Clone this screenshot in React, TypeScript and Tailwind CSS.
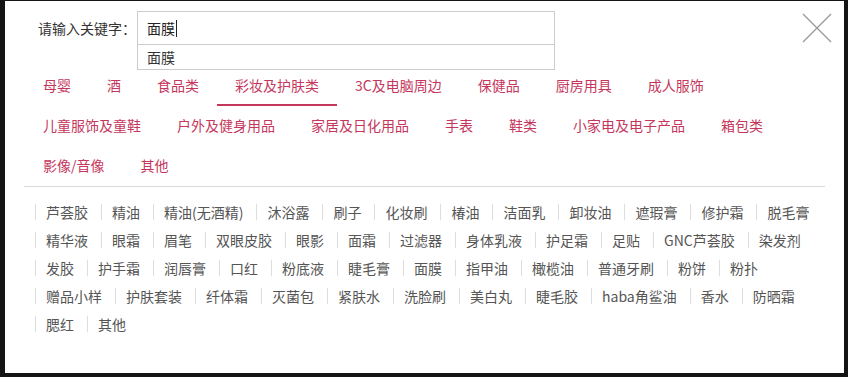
const tabs: string[][] = [
  ['母婴', '酒', '食品类', '彩妆及护肤类', '3C及电脑周边', '保健品', '厨房用具', '成人服饰'],
  ['儿童服饰及童鞋', '户外及健身用品', '家居及日化用品', '手表', '鞋类', '小家电及电子产品', '箱包类'],
  ['影像/音像', '其他'],
];

const tags = [
  '芦荟胶', '精油', '精油(无酒精)', '沐浴露', '刷子', '化妆刷', '椿油', '洁面乳', '卸妆油', '遮瑕膏', '修护霜', '脱毛膏',
  '精华液', '眼霜', '眉笔', '双眼皮胶', '眼影', '面霜', '过滤器', '身体乳液', '护足霜', '足贴', 'GNC芦荟胶', '染发剂',
  '发胶', '护手霜', '润唇膏', '口红', '粉底液', '睫毛膏', '面膜', '指甲油', '橄榄油', '普通牙刷', '粉饼', '粉扑',
  '赠品小样', '护肤套装', '纤体霜', '灭菌包', '紧肤水', '洗脸刷', '美白丸', '睫毛胶', 'haba角鲨油', '香水', '防晒霜',
  '腮红', '其他',
];

export default function App() {
  const active = '彩妆及护肤类';

  return (
    <div className="w-[848px] h-[377px] bg-[#141414] pl-[5px] pt-[1px] font-['Microsoft_YaHei','Noto_Sans_CJK_SC',sans-serif] overflow-hidden">
      <div className="relative w-[839px] h-[372px] bg-white">
        {/* search row */}
        <div className="flex items-center pt-[10px] pl-[33px]">
          <span className="w-[99px] text-[14px] leading-[34px] text-[#333]">请输入关键字：</span>
          <div className="relative">
            <div className="w-[418px] h-[34px] border border-[#ccc] flex items-center pl-[9px] text-[14px] text-[#222]">
              面膜
              <span className="ml-[1px] w-px h-[17px] bg-[#222]"></span>
            </div>
            <div className="absolute left-0 top-[33px] w-[418px] h-[26px] border border-[#ccc] bg-white pl-[9px] text-[14px] leading-[24px] text-[#333] z-10">
              面膜
            </div>
          </div>
        </div>

        {/* close */}
        <button className="absolute right-[12px] top-[12px] w-[30px] h-[30px]">
          <svg viewBox="0 0 30 30" className="w-[30px] h-[30px]" fill="none" stroke="#999" strokeWidth={1.3}>
            <path d="M1 1L29 29M29 1L1 29" />
          </svg>
        </button>

        {/* category tabs */}
        <div className="mt-[21px] pl-[20px]">
          {tabs.map((row, i) => (
            <div key={i} className="flex">
              {row.map((t) => (
                <div
                  key={t}
                  className={`h-[40px] px-[18px] flex items-center text-[14px] text-[#c5365c] border-b-2 ${
                    t === active ? 'border-[#c5365c]' : 'border-transparent'
                  }`}
                >
                  {t}
                </div>
              ))}
            </div>
          ))}
        </div>

        <div className="ml-[19px] w-[801px] border-t border-[#d9d9d9]"></div>

        {/* tags */}
        <div className="ml-[30px] w-[790px] pt-[11px] flex flex-wrap">
          {tags.map((t, i) => (
            <span
              key={i}
              className="my-[6px] pl-[10px] pr-[13px] border-l border-[#ddd] text-[14px] leading-[16px] text-[#555]"
            >
              {t}
            </span>
          ))}
        </div>
      </div>
    </div>
  );
}
